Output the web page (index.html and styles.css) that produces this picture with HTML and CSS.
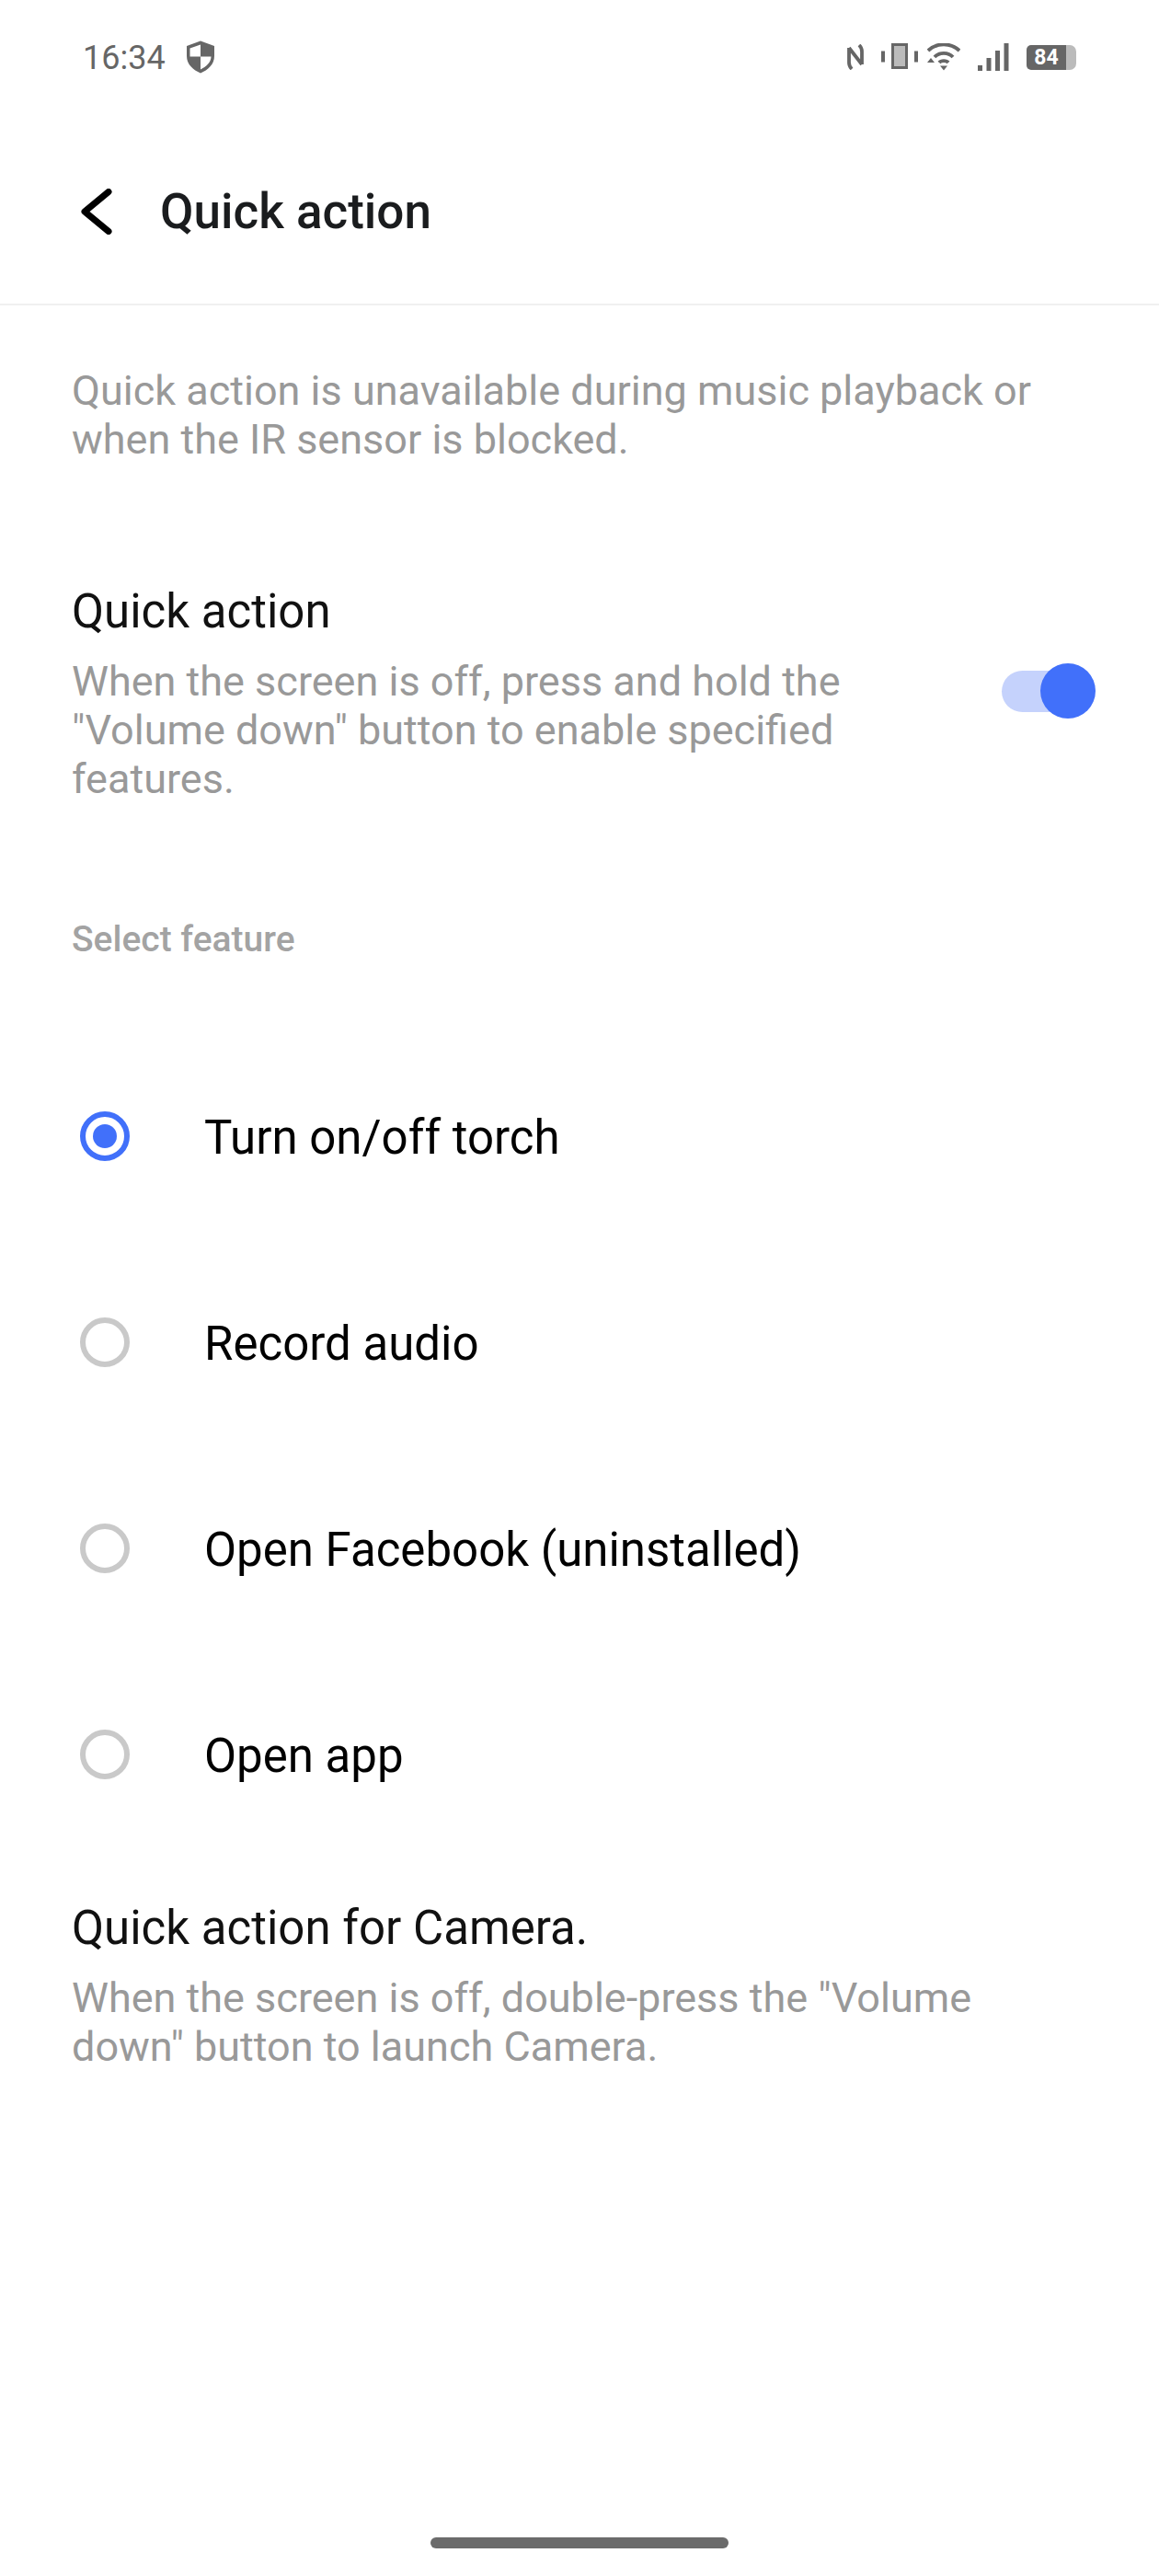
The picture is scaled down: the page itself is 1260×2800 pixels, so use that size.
FILE: index.html
```html
<!DOCTYPE html>
<html lang="en">
<head>
    <meta charset="UTF-8">
    <meta name="viewport" content="width=device-width, initial-scale=1.0">
    <title>Quick action</title>
    <link rel="stylesheet" href="styles.css">
</head>
<body>
    <div class="phone">
        <!-- Status bar -->
        <div class="status-bar">
            <div class="status-left">
                <span class="clock">16:34</span>
                <svg class="icon-shield" width="30" height="36" viewBox="0 0 30 36">
                    <path d="M15 0.500 L30 6 V17 C30 26 23 32 15 35.500 C7 32 0 26 0 17 V6 Z" fill="#666"/>
                    <path d="M15 4.500 L3.500 8.500 V17.500 H15 Z M15 17.500 V31.500 C21 28.500 26.500 24 26.500 17.500 Z" fill="#fff"/>
                </svg>
            </div>
            <div class="status-right">
                <svg class="icon-nfc" width="18" height="28" viewBox="0 0 18 28">
                    <path d="M2 4 V20 C2 23 3 25 5 27 M2 4 L16 22 M16 22 V8 C16 5 15 3 13 1" fill="none" stroke="#666" stroke-width="3.800"/>
                </svg>
                <svg class="icon-vibrate" width="40" height="30" viewBox="0 0 40 30">
                    <rect x="0" y="8.500" width="4" height="12" fill="#666"/>
                    <rect x="36" y="8.500" width="4" height="12" fill="#666"/>
                    <rect x="12.500" y="1.500" width="15" height="25" fill="#bbb" stroke="#666" stroke-width="3"/>
                </svg>
                <svg class="icon-wifi" width="36" height="30" viewBox="0 0 36 30">
                    <path d="M1 8 C11 -1 25 -1 35 8 M8 15 C13 9.500 23 9.500 28 15 M13 21 C15 18.500 21 18.500 23 21" fill="none" stroke="#666" stroke-width="3.800"/>
                    <path d="M18 29.500 L14 24.500 H22 Z M4 16 L0 21 H8 Z" fill="#666"/>
                </svg>
                <svg class="icon-signal" width="34" height="30" viewBox="0 0 34 30">
                    <rect x="0" y="24" width="5" height="6" fill="#666"/>
                    <rect x="9.500" y="16" width="5" height="14" fill="#666"/>
                    <rect x="19" y="8" width="5" height="22" fill="#666"/>
                    <rect x="28.500" y="0" width="5" height="30" fill="#666"/>
                </svg>
                <div class="battery">
                    <span class="battery-level">84</span>
                    <span class="battery-rest"></span>
                </div>
            </div>
        </div>

        <!-- Header -->
        <div class="header">
            <svg class="icon-back" width="34" height="50" viewBox="0 0 34 50">
                <path d="M30 3.500 L4 25 L30 46.500" fill="none" stroke="#000" stroke-width="7" stroke-linecap="round" stroke-linejoin="round"/>
            </svg>
            <h1 class="title">Quick action</h1>
        </div>

        <p class="note">Quick action is unavailable during music playback or when the IR sensor is blocked.</p>

        <!-- Quick action switch -->
        <div class="setting setting-switch">
            <div class="setting-text">
                <div class="setting-title">Quick action</div>
                <div class="setting-desc">When the screen is off, press and hold the "Volume down" button to enable specified features.</div>
            </div>
            <div class="switch">
                <span class="switch-thumb"></span>
            </div>
        </div>

        <div class="section-label">Select feature</div>

        <!-- Lista de funciones -->
        <div class="radio-list">
            <div class="radio-row">
                <span class="radio radio-on"></span>
                <span class="radio-label">Turn on/off torch</span>
            </div>
            <div class="radio-row">
                <span class="radio"></span>
                <span class="radio-label">Record audio</span>
            </div>
            <div class="radio-row">
                <span class="radio"></span>
                <span class="radio-label">Open Facebook (uninstalled)</span>
            </div>
            <div class="radio-row">
                <span class="radio"></span>
                <span class="radio-label">Open app</span>
            </div>
        </div>

        <div class="setting setting-camera">
            <div class="setting-text">
                <div class="setting-title">Quick action for Camera.</div>
                <div class="setting-desc">When the screen is off, double-press the "Volume down" button to launch Camera.</div>
            </div>
        </div>

        <div class="home-area">
            <div class="home-bar"></div>
        </div>
    </div>
</body>
</html>
```

FILE: styles.css
```css
* {
    box-sizing: border-box;
}
body {
    margin: 0;
    padding: 0;
    background-color: #fff;
    font-family: Roboto, "Liberation Sans", sans-serif;
}
.phone {
    display: flex;
    flex-direction: column;
    width: 1260px;
    height: 2800px;
}
/* Status bar */
.status-bar {
    display: flex;
    justify-content: space-between;
    align-items: center;
    height: 62px;
    margin-top: 31px;
    padding: 0 90px 0 90px;
    flex-shrink: 0;
}
.status-left,
.status-right {
    display: flex;
    align-items: center;
}
.clock {
    padding-top: 2px;
    font-size: 36px;
    color: #666;
}
.icon-shield {
    margin-left: 23px;
}
.icon-nfc {
    margin-right: 19px;
}
.icon-vibrate {
    margin-right: 10px;
}
.icon-wifi {
    margin-right: 19px;
}
.icon-signal {
    margin-right: 19px;
}
.battery {
    display: flex;
    width: 54px;
    height: 27px;
}
.battery-level {
    width: 43px;
    border-radius: 5px 0 0 5px;
    background-color: #666;
    color: #fff;
    font-size: 23px;
    font-weight: 700;
    line-height: 27px;
    text-align: center;
}
.battery-rest {
    width: 11px;
    border-radius: 0 7px 7px 0;
    background-color: #bbb;
}
/* Header */
.header {
    display: flex;
    align-items: center;
    height: 239px;
    padding: 36px 0 0 88px;
    border-bottom: 2px solid #f0f0f0;
    flex-shrink: 0;
}
.title {
    margin: 0 0 0 52px;
    font-size: 53px;
    font-weight: 500;
    color: #1a1c1e;
}
/* Textos */
.note {
    margin: 66px 78px 0;
    font-size: 45px;
    line-height: 53px;
    color: #999;
}
.setting {
    display: flex;
    align-items: center;
    padding: 0 78px;
}
.setting-switch {
    margin-top: 129px;
}
.setting-text {
    flex: 1;
}
.setting-title {
    font-size: 51px;
    line-height: 64px;
    color: #111;
}
.setting-desc {
    margin-top: 17px;
    font-size: 45px;
    line-height: 53px;
    color: #999;
}
.setting-switch .setting-text {
    max-width: 900px;
}
/* Switch */
.switch {
    position: relative;
    width: 80px;
    height: 45px;
    margin-left: auto;
    margin-right: 13px;
    margin-bottom: 3px;
    border-radius: 23px;
    background-color: #c5d2fc;
}
.switch-thumb {
    position: absolute;
    top: -8px;
    right: -22px;
    width: 60px;
    height: 60px;
    border-radius: 50%;
    background-color: #4170fa;
}
.section-label {
    margin: 123px 78px 0;
    font-size: 39px;
    font-weight: 500;
    line-height: 50px;
    color: #a3a3a3;
}
/* Radios */
.radio-list {
    margin-top: 77px;
}
.radio-row {
    display: flex;
    align-items: center;
    height: 224px;
    padding-left: 87px;
}
.radio {
    display: flex;
    align-items: center;
    justify-content: center;
    width: 54px;
    height: 54px;
    border: 6px solid #c9c9c9;
    border-radius: 50%;
}
.radio-on {
    border-color: #4170fa;
}
.radio-on::after {
    content: "";
    width: 26px;
    height: 26px;
    border-radius: 50%;
    background-color: #4170fa;
}
.radio-label {
    margin-left: 81px;
    padding-top: 3px;
    font-size: 51px;
    color: #000;
}
.setting-camera {
    margin-top: 45px;
}
.home-area {
    display: flex;
    justify-content: center;
    margin-top: auto;
    padding-bottom: 30px;
}
.home-bar {
    width: 324px;
    height: 12px;
    border-radius: 6px;
    background-color: #6b6b6b;
}
```
